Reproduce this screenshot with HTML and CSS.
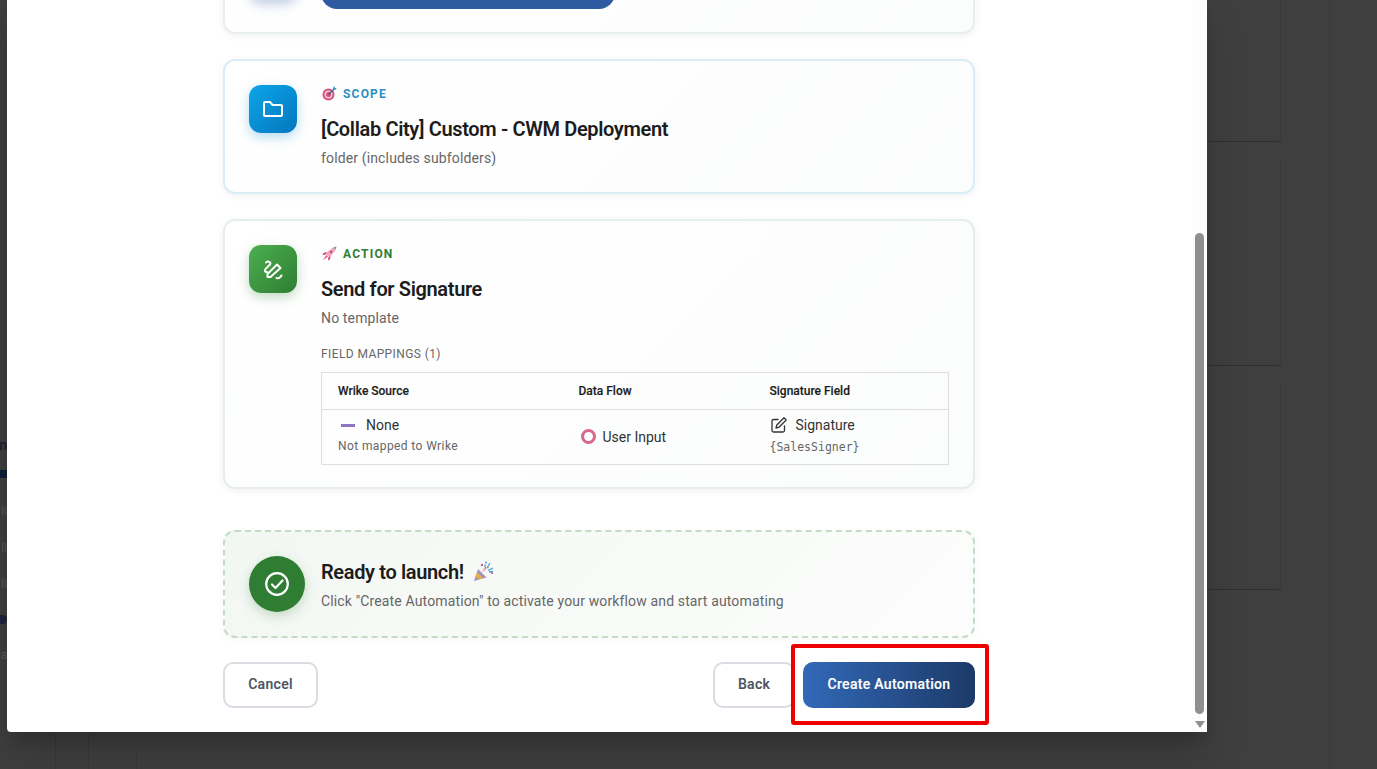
FILE: index.html
```html
<!DOCTYPE html>
<html lang="en">
<head>
<meta charset="utf-8">
<title>Create Automation</title>
<link rel="stylesheet" href="styles.css">
</head>
<body>
<div class="backdrop">
  <div class="bg-panel bg-panel-1"></div>
  <div class="bg-panel bg-panel-2"></div>
  <div class="bg-panel bg-panel-3"></div>
  <div class="bg-vline bg-v1"></div>
  <div class="bg-vline bg-v2"></div>
  <div class="bg-vline bg-v3"></div>
  <div class="bg-vline bg-v4"></div>
  <div class="bg-frag bg-f1">Automation</div>
  <div class="bg-bar bg-f2"></div>
  <div class="bg-frag bg-f3">Collab li</div>
  <div class="bg-frag bg-f4">Collab li</div>
  <div class="bg-frag bg-f5">Collab li</div>
  <div class="bg-bar bg-f6"></div>
  <div class="bg-frag bg-f7">Team na</div>
</div>

<div class="modal">
  <div class="content">
    <section class="card card-white card-first">
      <div class="icon-box icon-navy"></div>
      <div class="card-body"><div class="blue-bar"></div></div>
    </section>

    <section class="card card-scope">
      <div class="icon-box icon-blue">
        <svg width="24" height="24" viewBox="0 0 24 24" fill="none" stroke="#fff" stroke-width="2" stroke-linecap="round" stroke-linejoin="round"><path d="M3 18V6a1 1 0 0 1 1-1h5l2.500 3H20a1 1 0 0 1 1 1v9a1 1 0 0 1-1 1H4a1 1 0 0 1-1-1z"/></svg>
      </div>
      <div class="card-body">
        <div class="label label-blue">
          <svg class="label-emoji" width="15" height="15" viewBox="0 0 15 15"><circle cx="6.500" cy="8.500" r="6" fill="#d9507c"/><circle cx="6.500" cy="8.500" r="4" fill="#f2c8d8"/><circle cx="6.500" cy="8.500" r="2.500" fill="#d9507c"/><path d="M6.500 8.500 12.500 2.500" stroke="#35608f" stroke-width="1.300"/><path d="M11 2l1.500-1.700.6 1.600 1.700.5-1.700 1.600-1.700-.4z" fill="#3f8fc8"/></svg>
          <span>SCOPE</span>
        </div>
        <h2 class="card-title">[Collab City] Custom - CWM Deployment</h2>
        <p class="card-sub">folder (includes subfolders)</p>
      </div>
    </section>

    <section class="card card-action">
      <div class="icon-box icon-green">
        <svg width="24" height="24" viewBox="0 0 24 24" fill="none" stroke="#fff" stroke-width="2" stroke-linecap="round" stroke-linejoin="round"><path d="M5 5.500c2-1.800 5.500-.5 4 2L4.500 12c-1.500 2 0 3.500 1.500 3"/><path d="M6.500 20v-3L16 7.500l3.500 3.500L9.500 20z"/><path d="M15.500 21c1.200.5 2.500.3 3.500-.7l1.500-1.800"/></svg>
      </div>
      <div class="card-body">
        <div class="label label-green">
          <svg class="label-emoji" width="15" height="15" viewBox="0 0 15 15"><path d="M3.500 7.500 10 2l4.500-1.500L13 5l-5.500 6.500z" fill="#e9a9be"/><path d="M11.500 1.500 14.500.5 13.500 3.500z" fill="#5a9ac8"/><circle cx="9" cy="6" r="1.200" fill="#d9406c"/><path d="M4.500 6 1.500 7 .5 9l3.500-.5zM8.500 10.500 8 13.500l-2 1 .5-3.500z" fill="#d9406c"/><path d="M.8 14.200 4.500 9l1.500 1.500z" fill="#e0507c"/></svg>
          <span>ACTION</span>
        </div>
        <h2 class="card-title">Send for Signature</h2>
        <p class="card-sub">No template</p>
        <div class="map-label">FIELD MAPPINGS (1)</div>
        <table class="map-table">
          <thead>
            <tr><th class="col-a">Wrike Source</th><th class="col-b">Data Flow</th><th class="col-c">Signature Field</th></tr>
          </thead>
          <tbody>
            <tr>
              <td>
                <div class="cell-main"><span class="dash"></span><span>None</span></div>
                <div class="cell-note">Not mapped to Wrike</div>
              </td>
              <td>
                <div class="flow"><span class="ring"></span><span>User Input</span></div>
              </td>
              <td>
                <div class="cell-main sig-main">
                  <svg width="18" height="18" viewBox="0 0 18 18" fill="none" stroke="#333" stroke-width="1.300" stroke-linecap="round" stroke-linejoin="round"><path d="M8 3.500H3.500A1.500 1.500 0 0 0 2 5v9.500A1.500 1.500 0 0 0 3.500 16H13a1.500 1.500 0 0 0 1.500-1.500V10"/><path d="M14 1.800 16.200 4 9 11.200l-3 .8.800-3z"/></svg>
                  <span>Signature</span>
                </div>
                <div class="cell-code">{SalesSigner}</div>
              </td>
            </tr>
          </tbody>
        </table>
      </div>
    </section>

    <section class="ready">
      <div class="ready-icon">
        <svg width="28" height="28" viewBox="0 0 28 28" fill="none" stroke="#fff" stroke-width="2.200" stroke-linecap="round" stroke-linejoin="round"><circle cx="14" cy="14" r="10.800"/><path d="m9 14.500 3.500 3.500L19.500 10.500"/></svg>
      </div>
      <div>
        <h2 class="ready-title">Ready to launch! <svg class="party" width="21" height="21" viewBox="0 0 21 21"><path d="M1 20 5 8l8.500 8.500z" fill="#a392bd"/><path d="M2.500 15.500 4 11l6 6-4 1.500z" fill="#e8b04c"/><path d="M9 11l1.500-4 3 .5-1 2.500z" fill="#f0c0d0"/><circle cx="9" cy="4" r="1.200" fill="#e0508c"/><circle cx="15" cy="6.500" r="1" fill="#f0b040"/><circle cx="19" cy="12" r="1.100" fill="#e0508c"/><circle cx="13" cy="1.500" r="1" fill="#4aa0d8"/><path d="M12 3.500 12.500 8M17 2l-3 5M20 7l-5 2.500M20 10.500l-4 .5" stroke="#4aa0d8" stroke-width="1.300" fill="none"/></svg></h2>
        <p class="ready-sub">Click "Create Automation" to activate your workflow and start automating</p>
      </div>
    </section>

    <div class="actions">
      <button class="btn btn-ghost btn-cancel">Cancel</button>
      <div class="actions-right">
        <button class="btn btn-ghost btn-back">Back</button>
        <button class="btn btn-primary">Create Automation</button>
      </div>
    </div>
  </div>

  <div class="scrollbar">
    <div class="thumb"></div>
    <div class="arrow"></div>
  </div>
</div>

<div class="highlight"></div>
</body>
</html>
```
FILE: styles.css
```css
* { box-sizing: border-box; }
html, body { margin: 0; padding: 0; height: 100%; overflow: hidden; }
body {
  background: #3e3e3e;
  font-family: Roboto, "Liberation Sans", sans-serif;
  color: #1c1c1c;
  position: relative;
}

/* Dimmed page behind the dialog */
.backdrop { position: absolute; inset: 0; background: #3f3f3f; overflow: hidden; }
.bg-panel {
  position: absolute; left: 1100px; width: 181px;
  border: 1px solid #3a3a3a; border-top: 0; border-left: 0;
  border-bottom-color: #303030;
  border-radius: 0 0 3px 0;
}
.bg-panel-1 { top: 0; height: 142px; }
.bg-panel-2 { top: 160px; height: 206px; }
.bg-panel-3 { top: 384px; height: 206px; }
.bg-vline { position: absolute; width: 1px; background: #383838; }
.bg-v1 { left: 1329px; top: 0; bottom: 0; }
.bg-v2 { left: 55px; top: 732px; bottom: 0; }
.bg-v3 { left: 88px; top: 732px; bottom: 0; }
.bg-v4 { left: 136px; top: 752px; bottom: 0; }
.bg-frag {
  position: absolute; right: calc(100% - 7px); white-space: nowrap;
  font-size: 12px; line-height: 14px; color: #5a5a5a;
}
.bg-f1 { top: 438px; font-size: 14px; font-weight: 700; color: #1e2430; }
.bg-f3 { top: 504px; }
.bg-f4 { top: 541px; }
.bg-f5 { top: 577px; }
.bg-f7 { top: 648px; }
.bg-bar { position: absolute; left: 0; width: 7px; }
.bg-f2 { top: 470px; height: 8px; background: #101d38; }
.bg-f6 { top: 615px; height: 9px; background: #1f2440; border-radius: 0 5px 5px 0; }

/* Dialog window */
.modal {
  position: absolute; left: 7px; top: 0; width: 1200px; height: 732px;
  background: #fff; overflow: hidden;
  border-radius: 0 0 0 4px;
  box-shadow: 0 11px 15px -7px rgba(0, 0, 0, .2), 0 24px 38px 3px rgba(0, 0, 0, .14);
}
.content {
  height: 100%; width: 752px; margin-left: 216px;
  display: flex; flex-direction: column; justify-content: flex-end;
  padding-bottom: 24px;
}

.card {
  flex: none; display: flex; gap: 24px; padding: 24px; margin-bottom: 25px;
  border: 2px solid #e6eeee; border-radius: 12px;
  background: linear-gradient(135deg, #fff 0%, #fbfcfc 100%);
  box-shadow: 0 2px 8px rgba(0, 0, 0, .06);
}
.card-first { height: 100px; }
.card-scope { height: 135px; border-color: #daecf6; }
.card-action { height: 270px; border-color: #e6eee8; margin-bottom: 41px; }
.card-body { flex: 1; min-width: 0; }

.icon-box {
  flex: none; width: 48px; height: 48px; border-radius: 12px;
  display: flex; align-items: center; justify-content: center;
}
.icon-navy { margin-top: -8px; background: #2d5aa0; box-shadow: 0 4px 12px rgba(45, 90, 160, .3); }
.icon-blue { background: linear-gradient(135deg, #0ea5e9, #0277bd); box-shadow: 0 4px 12px rgba(2, 136, 209, .3); }
.icon-green { background: linear-gradient(135deg, #4caf50, #2e7d32); box-shadow: 0 4px 12px rgba(46, 125, 50, .3); }

.blue-bar { height: 48px; width: 294px; margin-top: 1px; background: #2d5aa0; border-radius: 16px; }

.label {
  display: flex; align-items: center; gap: 6px;
  height: 18px; margin-bottom: 13px; margin-left: 1px;
  font-size: 12px; font-weight: 700; letter-spacing: 1.200px;
}
.label-blue { color: #2a8fc4; }
.label-green { color: #2e7d32; }
.label-emoji { flex: none; margin-top: -1px; }

.card-title {
  margin: 0 0 6px; font-size: 20px; line-height: 26px; font-weight: 600;
  letter-spacing: -.35px; color: #1c1c1c;
}
.card-sub { margin: 0; font-size: 14px; line-height: 20px; color: #666; letter-spacing: .14px; }

.map-label { margin-top: 18px; font-size: 12px; line-height: 16px; color: #666; letter-spacing: .4px; }
.map-table {
  width: 628px; margin-top: 10px; border-collapse: collapse; table-layout: fixed;
  border: 1px solid #dedede; font-size: 14px;
}
.map-table th {
  height: 37px; padding: 0 16px; text-align: left;
  font-size: 12px; font-weight: 500; color: #1c1c1c;
  border-bottom: 1px solid #dedede;
  -webkit-text-stroke: .15px #1c1c1c;
}
.col-a { width: 241px; }
.col-b { width: 191px; }
.map-table td { height: 55px; padding: 6px 16px 0; vertical-align: top; }
.map-table td:nth-child(2) { vertical-align: middle; padding-top: 0; }
.cell-main { display: flex; align-items: center; gap: 11px; height: 18px; color: #333; }
.dash { width: 14px; height: 3px; margin-left: 3px; background: #8d77c0; }
.cell-note { margin-top: 4px; font-size: 12px; line-height: 16px; color: #666; letter-spacing: .4px; }
.flow { display: flex; align-items: center; gap: 7px; color: #333; margin-left: 2px; margin-top: -1px; }
.ring { width: 15px; height: 15px; border: 3px solid #d9678c; border-radius: 50%; }
.sig-main { gap: 8px; }
.cell-code { margin-top: 5px; font-family: "DejaVu Sans Mono", "Liberation Mono", monospace; font-size: 11.500px; line-height: 16px; color: #666; }

.ready {
  flex: none; height: 108px; margin-bottom: 24px;
  display: flex; align-items: center; gap: 16px; padding: 0 24px;
  border: 2px dashed #c3dcc6; border-radius: 12px;
  background: linear-gradient(135deg, #f3f7f3, #fcfdfc);
  box-shadow: 0 2px 8px rgba(0, 0, 0, .03);
}
.ready-icon {
  flex: none; width: 56px; height: 56px; border-radius: 50%;
  background: #2e7d32; display: flex; align-items: center; justify-content: center;
  box-shadow: 0 4px 12px rgba(46, 125, 50, .25);
}
.ready-title {
  margin: 1px 0 6px; font-size: 20px; line-height: 26px; font-weight: 600;
  letter-spacing: -.35px; color: #1c1c1c;
  display: flex; align-items: center; gap: 9px;
}
.party { flex: none; }
.ready-sub { margin: 0; font-size: 14px; line-height: 20px; color: #666; letter-spacing: .14px; }

.actions { flex: none; height: 46px; display: flex; justify-content: space-between; }
.actions-right { display: flex; gap: 8px; }
.btn {
  height: 46px; border-radius: 10px; font-family: inherit; font-size: 14px; font-weight: 500;
  letter-spacing: .3px; padding: 0 0 2px; -webkit-text-stroke: .15px currentColor;
}
.btn-ghost { background: #fff; color: #4b5563; border: 2px solid #d9dde3; }
.btn-cancel { width: 95px; }
.btn-back { width: 82px; }
.btn-primary {
  width: 172px; border: 0; color: #fff;
  background: linear-gradient(90deg, #3269b8, #1c3a68);
}

/* Scrollbar of the dialog */
.scrollbar { position: absolute; right: 0; top: 0; bottom: 0; width: 15px; background: #fdfdfd; }
.thumb { position: absolute; left: 3px; top: 233px; width: 9px; height: 481px; background: #8f8f8f; border-radius: 5px; }
.arrow {
  position: absolute; left: 3px; top: 721px; width: 0; height: 0;
  border-left: 5px solid transparent; border-right: 5px solid transparent; border-top: 7px solid #8f8f8f;
}

/* Red annotation rectangle */
.highlight {
  position: absolute; left: 791px; top: 644px; width: 198px; height: 81px;
  border: 4px solid #ee0000; border-radius: 3px;
}
```
